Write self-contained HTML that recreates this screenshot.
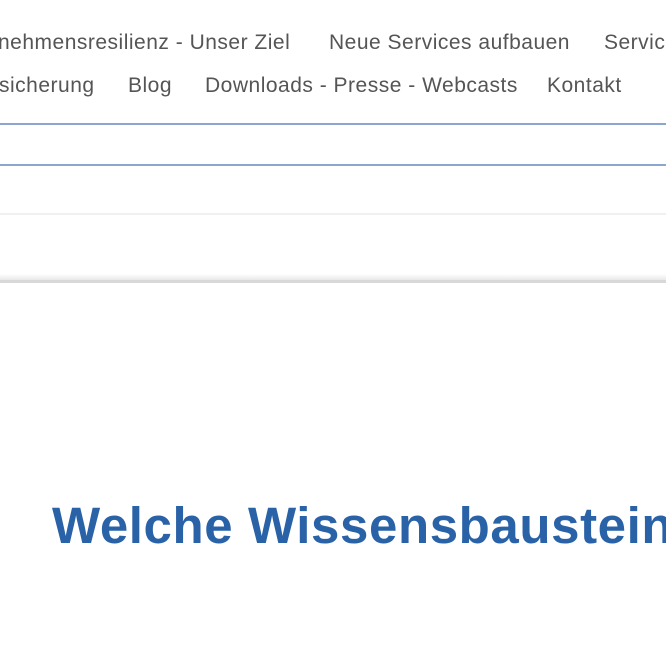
<!DOCTYPE html>
<html><head><meta charset="utf-8"><style>
body{margin:0;width:666px;height:666px;background:#fff;position:relative;overflow:hidden;font-family:"Liberation Sans",sans-serif}
.n{position:absolute;font-size:21px;letter-spacing:0.5px;color:#555;white-space:nowrap;line-height:1}
.l{position:absolute;left:0;width:666px}
h1{position:absolute;left:52px;top:500px;margin:0;font-size:51px;letter-spacing:0.6px;font-weight:bold;color:#2a62a8;white-space:nowrap;line-height:1}
</style></head><body>
<div class="n" style="left:-2px;top:32px">nehmensresilienz - Unser Ziel</div>
<div class="n" style="left:329px;top:32px">Neue Services aufbauen</div>
<div class="n" style="left:604px;top:32px">Services</div>
<div class="n" style="left:-1px;top:75px">sicherung</div>
<div class="n" style="left:128px;top:75px">Blog</div>
<div class="n" style="left:205px;top:75px">Downloads - Presse - Webcasts</div>
<div class="n" style="left:547px;top:75px">Kontakt</div>
<div class="l" style="top:123px;height:2px;background:#8ca6cf"></div>
<div class="l" style="top:164px;height:2px;background:#8ca6cf"></div>
<div class="l" style="top:213px;height:2px;background:#f0f0f0"></div>
<div class="l" style="top:274px;height:6px;background:linear-gradient(#fff,#e8e8e8)"></div>
<div class="l" style="top:280px;height:3px;background:#d8d8d8"></div>
<h1>Welche Wissensbausteine</h1>
</body></html>
